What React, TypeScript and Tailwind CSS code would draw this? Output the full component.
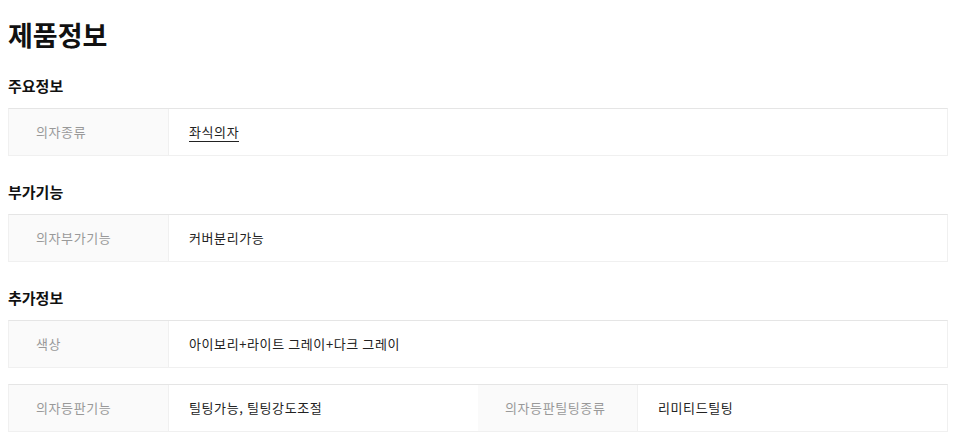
const font = { fontFamily: '"Noto Sans CJK KR", "Noto Sans", sans-serif' };

type Cell = { label: string; value: string; underline?: boolean };

function Row({ cells }: { cells: Cell[] }) {
    return (
        <div className="flex border border-[#f0f0f0] border-t-[#e5e5e5]">
            {cells.map((c, i) => (
                <div key={i} className="flex flex-1 min-w-0">
                    <div className="w-[160px] shrink-0 h-[46px] flex items-center pl-[27px] bg-[#fafafa] border-r border-[#f0f0f0] text-[13px] tracking-[0.6px] text-[#999]">
                        {c.label}
                    </div>
                    <div className="flex-1 h-[46px] flex items-center pl-[20px] text-[13px] tracking-[0.6px] text-[#222]">
                        <span className={c.underline ? 'border-b border-[#222] leading-[18px]' : ''}>
                            {c.value}
                        </span>
                    </div>
                </div>
            ))}
        </div>
    );
}

function Section({ title, top, children }: { title: string; top: string; children: React.ReactNode }) {
    return (
        <section className={`flex flex-col ${top}`}>
            <h3 className="text-[15px] font-bold leading-[20px] text-[#111] mb-[12px]">{title}</h3>
            {children}
        </section>
    );
}

export default function App() {
    return (
        <div className="bg-white min-h-screen pl-[8px] pt-[17px]" style={font}>
            <div className="w-[940px] flex flex-col">
                <h1 className="text-[27px] font-bold leading-[36px] text-[#111]">제품정보</h1>
                <Section title="주요정보" top="mt-[23px]">
                    <Row cells={[{ label: '의자종류', value: '좌식의자', underline: true }]} />
                </Section>
                <Section title="부가기능" top="mt-[26px]">
                    <Row cells={[{ label: '의자부가기능', value: '커버분리가능' }]} />
                </Section>
                <Section title="추가정보" top="mt-[26px]">
                    <div className="flex flex-col gap-[16px]">
                        <Row cells={[{ label: '색상', value: '아이보리+라이트 그레이+다크 그레이' }]} />
                        <Row
                            cells={[
                                { label: '의자등판기능', value: '틸팅가능, 틸팅강도조절' },
                                { label: '의자등판틸팅종류', value: '리미티드틸팅' },
                            ]}
                        />
                    </div>
                </Section>
            </div>
        </div>
    );
}
